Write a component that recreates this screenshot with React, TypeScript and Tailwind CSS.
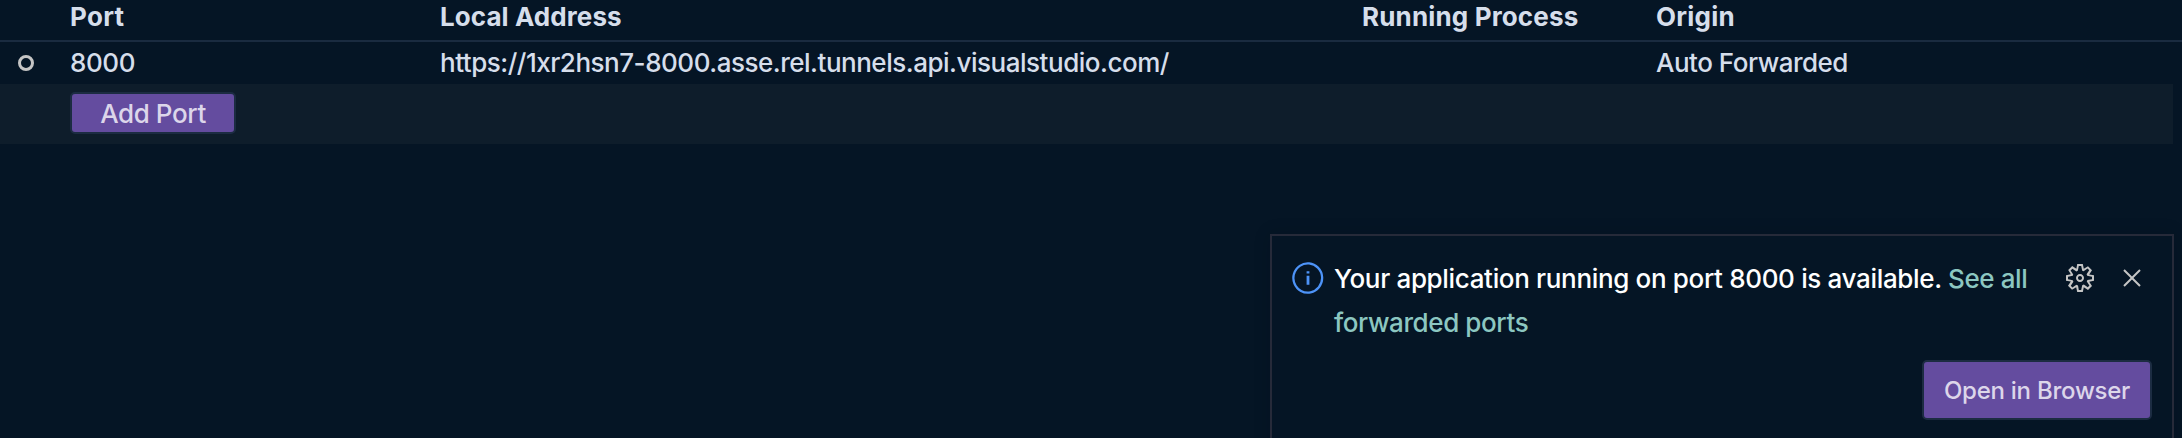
import { VscClose, VscGear, VscInfo } from "react-icons/vsc";

const columns = "grid grid-cols-[70px_370px_922px_294px_1fr] items-center";

function PortsTable() {
  return (
    <div className="w-full text-[#d6deeb]">
      <div className={`${columns} h-[42px] border-b-2 border-[#1a2b40] pb-[6px] text-[26px] leading-[34px] font-bold`}>
        <span />
        <span className="tracking-[0.3px]">Port</span>
        <span className="tracking-[0.08px]">Local Address</span>
        <span className="tracking-[0.15px]">Running Process</span>
        <span className="tracking-[0.25px]">Origin</span>
      </div>
      <div className={`${columns} h-[42px] text-[26px] leading-[42px] font-[450]`}>
        <span className="ml-[18px] size-4 rounded-full border-[3px] border-[#c5c5c5]" />
        <span className="tracking-[-0.4px]">8000</span>
        <span className="tracking-[-0.48px]">https://1xr2hsn7-8000.asse.rel.tunnels.api.visualstudio.com/</span>
        <span />
        <span className="tracking-[-0.5px]">Auto Forwarded</span>
      </div>
      <div className="mr-[9px] flex h-[60px] items-start bg-[#0e1d2b] pt-2 pl-[70px]">
        <button className="h-[42px] w-[166px] rounded-[5px] border-2 border-[#1c2c42] bg-[#644c9f] pt-[1px] text-[26px] leading-[38px] font-[450] tracking-[-0.4px] text-[#dcd6ea]">
          Add Port
        </button>
      </div>
    </div>
  );
}

function Notification() {
  return (
    <div className="absolute top-[234px] left-[1270px] flex h-[220px] w-[904px] flex-col border-2 border-[#262a39] bg-[#051525] shadow-[0_0_16px_rgba(0,8,18,0.15)]">
      <div className="flex pt-[21px] pl-[18px]">
        <VscInfo className="mt-[3px] size-9 shrink-0 text-[#4d93f8]" />
        <p className="ml-2 w-[730px] text-[26px] leading-[44px] font-[450] tracking-[-0.34px] text-white">
          Your application running on port 8000 is available. <a className="tracking-[-0.4px] text-[#8cc7c1]">See all forwarded ports</a>
        </p>
        <div className="mt-[5px] flex gap-5 text-[#c5c5c5]">
          <VscGear className="size-8" />
          <VscClose className="size-8" />
        </div>
      </div>
      <div className="mt-[15px] flex justify-end pr-5">
        <button className="h-[60px] w-[230px] rounded-[5px] border-2 border-[#1c2c42] bg-[#644c9f] pt-[2px] text-[24px] font-[450] tracking-[-0.25px] text-[#dcd6ea]">
          Open in Browser
        </button>
      </div>
    </div>
  );
}

export default function App() {
  return (
    <main className="relative h-[438px] w-full overflow-hidden bg-[#051525] font-['Inter',sans-serif]">
      <PortsTable />
      <Notification />
    </main>
  );
}
